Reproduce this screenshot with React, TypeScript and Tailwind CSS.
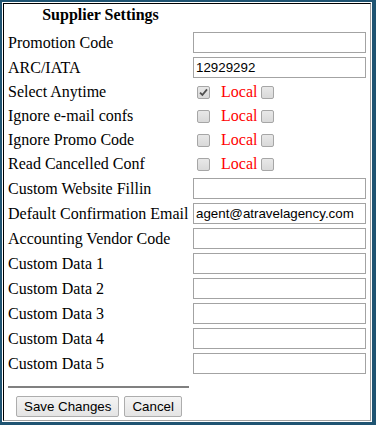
const serif = "font-['Liberation_Serif','Times_New_Roman',serif]";
const sans = "font-['Liberation_Sans',Arial,sans-serif]";

const topFields = [
  { label: "Promotion Code", value: "" },
  { label: "ARC/IATA", value: "12929292" },
];

const checkFields = [
  { label: "Select Anytime", checked: true },
  { label: "Ignore e-mail confs", checked: false },
  { label: "Ignore Promo Code", checked: false },
  { label: "Read Cancelled Conf", checked: false },
];

const bottomFields = [
  { label: "Custom Website Fillin", value: "" },
  { label: "Default Confirmation Email", value: "agent@atravelagency.com" },
  { label: "Accounting Vendor Code", value: "" },
  { label: "Custom Data 1", value: "" },
  { label: "Custom Data 2", value: "" },
  { label: "Custom Data 3", value: "" },
  { label: "Custom Data 4", value: "" },
  { label: "Custom Data 5", value: "" },
];

function Box({ checked }: { checked?: boolean }) {
  return (
    <span className="flex h-[13px] w-[13px] shrink-0 items-center justify-center rounded-[2px] border border-[#a6a6a6] bg-gradient-to-b from-[#e8e8e8] to-[#d9d9d9]">
      {checked && (
        <svg width="9" height="9" viewBox="0 0 9 9">
          <path d="M1 4.6 L3.4 7 L8 1.4" fill="none" stroke="#505050" strokeWidth="1.8" />
        </svg>
      )}
    </span>
  );
}

function TextRow({ label, value }: { label: string; value: string }) {
  return (
    <div className="flex h-[25px] items-center">
      <div className="w-[185px] whitespace-nowrap leading-[18px]">{label}</div>
      <input
        defaultValue={value}
        className={`${sans} h-[21px] w-[173px] border border-[#a3a3a3] bg-white px-[2px] text-[13.33px] text-black outline-none`}
      />
    </div>
  );
}

export default function App() {
  return (
    <div className="h-[425px] w-[376px] bg-[#1f5472] pb-[3px] pl-[2px] pr-[4px] pt-[2px]">
      <div className="h-full bg-white p-px">
        <div
          className={`${serif} h-full border border-b-[#a0a0a0] border-l-black border-r-[#a0a0a0] border-t-black pl-[4px] text-[16px] text-black`}
        >
          <div className="flex h-[26px] items-start pt-[2px]">
            <div className="w-[185px] text-center font-bold leading-[18px]">Supplier Settings</div>
          </div>

          {topFields.map((f) => (
            <TextRow key={f.label} {...f} />
          ))}

          {checkFields.map((f) => (
            <div key={f.label} className="flex h-[24px] items-center">
              <div className="w-[185px] whitespace-nowrap leading-[18px]">{f.label}</div>
              <div className="flex items-center pl-[4px]">
                <Box checked={f.checked} />
                <span className="ml-[11px] leading-[18px] text-[#ff0000]">Local</span>
                <span className="ml-[4px]">
                  <Box />
                </span>
              </div>
            </div>
          ))}

          {bottomFields.map((f) => (
            <TextRow key={f.label} {...f} />
          ))}

          <div className="mt-[10px] h-[2px] w-[181px] bg-[#808080]" />

          <div className={`${sans} mt-[8px] flex gap-[5px] pl-[8px] text-[13.33px]`}>
            <button className="h-[21px] rounded-[2px] border border-[#adadad] bg-gradient-to-b from-[#f4f4f4] to-[#e4e4e4] px-[7px] leading-none text-black">
              Save Changes
            </button>
            <button className="h-[21px] rounded-[2px] border border-[#adadad] bg-gradient-to-b from-[#f4f4f4] to-[#e4e4e4] px-[7px] leading-none text-black">
              Cancel
            </button>
          </div>
        </div>
      </div>
    </div>
  );
}
